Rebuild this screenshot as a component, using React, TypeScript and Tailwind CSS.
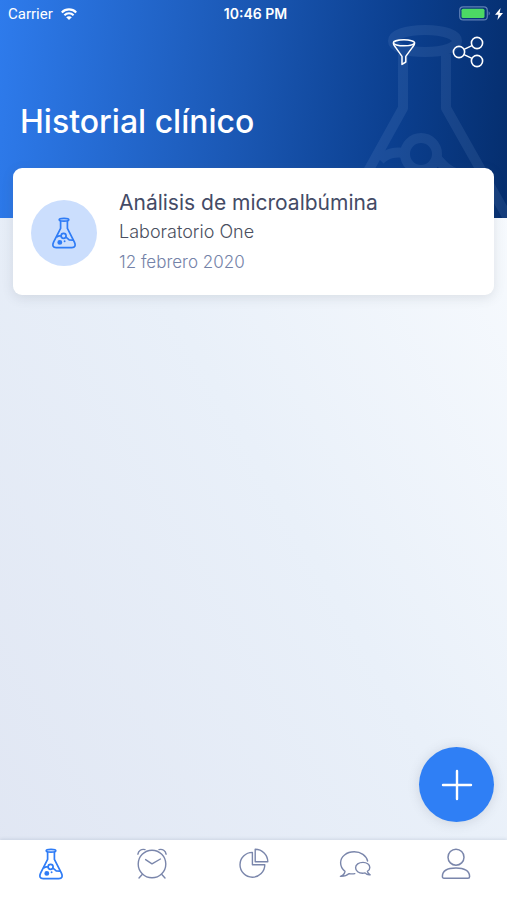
import type { ReactNode } from "react";

type IconProps = { className?: string };

type HistoryEntry = {
  title: string;
  place: string;
  date: string;
};

const entries: HistoryEntry[] = [
  {
    title: "Análisis de microalbúmina",
    place: "Laboratorio One",
    date: "12 febrero 2020",
  },
];

function Flask({ className }: IconProps) {
  return (
    <svg className={className} viewBox="0 0 24 32" fill="none" stroke="currentColor" strokeWidth="1.7" strokeLinecap="round" strokeLinejoin="round">
      <ellipse cx="12" cy="2.8" rx="4.8" ry="1.4" />
      <path d="M8.6 4.2V11.4L1.7 24.8C0 28.4 1 30.6 4.2 30.6H19.8C23 30.6 24 28.4 22.3 24.8L15.4 11.4V4.2" />
      <path d="M5 19.8C6.4 18.6 7.8 18.6 9.2 19M14 20.2L17.2 22.8L21 23.2" />
      <circle cx="11.6" cy="18.8" r="2.5" />
      <circle cx="7.8" cy="25.4" r="1.6" fill="currentColor" />
      <path d="M12.6 24.2V24.3" strokeWidth="1.9" />
    </svg>
  );
}

function Clock({ className }: IconProps) {
  return (
    <svg className={className} viewBox="0 0 30 32" fill="none" stroke="currentColor" strokeWidth="1.4" strokeLinecap="round" strokeLinejoin="round">
      <circle cx="15" cy="16" r="13.8" />
      <path d="M8.6 11.6L15 15.8L23.4 11" />
      <path d="M0.9 6.2C1.4 2.6 4.4 0.8 8 1.6M29.1 6.2C28.6 2.6 25.6 0.8 22 1.6" />
      <path d="M5.2 26.6L2 30M24.8 26.6L28 30" />
    </svg>
  );
}

function Pie({ className }: IconProps) {
  return (
    <svg className={className} viewBox="0 0 30 30" fill="none" stroke="currentColor" strokeWidth="1.4" strokeLinejoin="round">
      <path d="M13.4 4.4A12.4 12.4 0 1 0 25.8 16.8H13.4Z" />
      <path d="M16.2 1.2A12.6 12.6 0 0 1 28.8 13.8H16.2Z" />
    </svg>
  );
}

function Chat({ className }: IconProps) {
  return (
    <svg className={className} viewBox="0 0 32 28" fill="none" stroke="currentColor" strokeWidth="1.4" strokeLinecap="round" strokeLinejoin="round">
      <path d="M28.6 11C27.4 5.4 21.8 1.8 15.2 1.8C7.6 1.8 1.6 6.6 1.6 12.8C1.6 16.4 3.4 19.4 6 21.4C5.6 23.6 3.8 25.6 1.4 26.4C5.2 26.6 8.2 25.4 10.2 23.6C12 24 14 24 15.8 23.6" />
      <path d="M28.4 21.4C30 20.4 30.8 19 30.8 17.4C30.8 14.4 27.6 12.4 24 12.4C19.8 12.4 16.6 14.6 16.6 17.8C16.6 21 19.8 23.2 23.6 23.2C24.4 23.2 25.2 23.1 26 22.9C27.2 24.2 29 25.2 31.2 24.8C29.6 24 28.6 22.8 28.4 21.4Z" />
    </svg>
  );
}

function Person({ className }: IconProps) {
  return (
    <svg className={className} viewBox="0 0 30 32" fill="none" stroke="currentColor" strokeWidth="1.5" strokeLinejoin="round">
      <circle cx="15" cy="9.2" r="8" />
      <path d="M1.4 28.4C1.4 23 6.6 20 15 20C23.4 20 28.6 23 28.6 28.4C28.6 29.6 28 30.2 27 30.2H3C2 30.2 1.4 29.6 1.4 28.4Z" />
    </svg>
  );
}

function Funnel() {
  return (
    <svg className="h-7 w-6" viewBox="0 0 24 28" fill="none" stroke="currentColor" strokeWidth="1.5" strokeLinejoin="round">
      <ellipse cx="12" cy="4.8" rx="10.6" ry="3" />
      <path d="M1.4 5.2C1.4 7 2.6 8 3.6 9.4L10 18.4V26.4L13.8 24V18.4L20.4 9.4C21.4 8 22.6 7 22.6 5.2" />
    </svg>
  );
}

function Share() {
  return (
    <svg className="h-8 w-8" viewBox="0 0 32 32" fill="none" stroke="currentColor" strokeWidth="1.6">
      <circle cx="7" cy="16" r="5.6" />
      <circle cx="25" cy="7" r="5.6" />
      <circle cx="25" cy="25" r="5.6" />
      <path d="M12 13.4L20 9.6M12 18.6L20 22.4" />
    </svg>
  );
}

function StatusBar() {
  return (
    <div className="grid h-7 grid-cols-3 items-center pr-1 pl-2 font-['Roboto',sans-serif] text-[15px]">
      <div className="flex items-center gap-2">
        <span>Carrier</span>
        <svg className="h-3 w-4" viewBox="0 0 16 12" fill="none" stroke="currentColor" strokeWidth="2.1">
          <path d="M0.8 4.4C4.8 0.4 11.2 0.4 15.2 4.4M3.4 7.2C6 4.6 10 4.6 12.6 7.2" />
          <path d="M8 12L5.2 9.2C6.8 7.8 9.2 7.8 10.8 9.2Z" fill="currentColor" stroke="none" />
        </svg>
      </div>
      <span className="text-center font-['Inter',sans-serif] text-sm font-semibold">10:46 PM</span>
      <div className="flex items-center justify-end gap-1">
        <svg className="h-4 w-8" viewBox="0 0 32 16" fill="none">
          <rect x="0.7" y="0.9" width="27.6" height="13" rx="3.5" stroke="#5f7fb5" strokeWidth="1.2" />
          <rect x="2.5" y="2.7" width="23" height="9.4" rx="1.6" fill="#4cd964" />
          <path d="M29.6 5.3C31.2 6.1 31.2 8.7 29.6 9.5Z" fill="#5f7fb5" />
        </svg>
        <svg className="h-3 w-2" viewBox="0 0 8 12" fill="currentColor">
          <path d="M5.6 0L0 6.8H3.4L2.4 12L8 5H4.6Z" />
        </svg>
      </div>
    </div>
  );
}

// Oversized flask that fades into the right side of the header
function HeaderFlask() {
  return (
    <svg className="absolute right-0 bottom-0 h-[194px] w-[150px] text-[#a5c4ee] opacity-10" viewBox="357 24 150 194" fill="none" stroke="currentColor" strokeWidth="10" strokeLinejoin="round">
      <path d="M403 54V108L342 218M446 54V108L508 218" />
      <path d="M425 30C405 30 393 35 393 41S405 52 425 52S457 47 457 41S445 30 425 30Z" />
      <path d="M380 160C388 152 396 152 406 153M435 156C442 164 446 170 458 174" />
      <circle cx="421" cy="154" r="16" />
    </svg>
  );
}

function EntryCard({ entry }: { entry: HistoryEntry }) {
  return (
    <article className="flex items-center gap-[22px] rounded-[9px] bg-white px-[18px] pt-[21px] pb-[18px] shadow-[0_3px_12px_rgba(80,85,100,0.14)]">
      <div className="flex size-[66px] shrink-0 items-center justify-center rounded-full bg-[#cbdefd] text-[#2f7cf6]">
        <Flask className="h-8 w-6" />
      </div>
      <div className="font-light">
        <h2 className="text-[21px] leading-7 font-normal text-[#444b66]">{entry.title}</h2>
        <p className="text-lg leading-[30px] text-[#4b5060]">{entry.place}</p>
        <p className="text-[17px] leading-[30px] text-[#7482a8]">{entry.date}</p>
      </div>
    </article>
  );
}

function Tab({ label, active, children }: { label: string; active?: boolean; children: ReactNode }) {
  return (
    <a
      href="#"
      aria-label={label}
      className={active ? "flex flex-1 justify-center text-[#2f7cf6]" : "flex flex-1 justify-center text-[#7a86ab]"}
    >
      {children}
    </a>
  );
}

export default function App() {
  return (
    <div className="flex min-h-screen flex-col bg-linear-[60deg,#e0e6f3,#e9f0f9_50%,#fbfdff] font-['Inter','Open_Sans',sans-serif]">
      <header className="relative overflow-hidden bg-linear-[95deg,#2e7bec,#1a57b3_48%,#0b3f8f_77%,#052e6e] pb-[74px] text-white">
        <HeaderFlask />
        <div className="relative">
          <StatusBar />
          <div className="flex h-12 items-center justify-end gap-9 pr-[23px]">
            <button type="button" aria-label="Filtrar">
              <Funnel />
            </button>
            <button type="button" aria-label="Compartir">
              <Share />
            </button>
          </div>
          <h1 className="px-5 pt-6 text-[32px] leading-[44px] font-medium">Historial clínico</h1>
        </div>
      </header>

      <main className="relative -mt-[50px] flex-1 px-[13px]">
        {entries.map((entry) => (
          <EntryCard key={entry.title} entry={entry} />
        ))}
      </main>

      <div className="flex justify-end px-[13px] pb-[18px]">
        <button
          type="button"
          aria-label="Añadir"
          className="flex size-[75px] items-center justify-center rounded-full bg-[#2f7ff5] text-white shadow-[0_1px_12px_rgba(80,85,100,0.18)]"
        >
          <svg className="size-8" viewBox="0 0 32 32" stroke="currentColor" strokeWidth="2.4" strokeLinecap="round">
            <path d="M16 2V30M2 16H30" />
          </svg>
        </button>
      </div>

      <nav className="flex h-[60px] bg-white pt-2 shadow-[0_-1px_3px_rgba(70,85,120,0.15)]">
        <Tab label="Historial" active>
          <Flask className="h-8 w-6" />
        </Tab>
        <Tab label="Recordatorios">
          <Clock className="h-8 w-[30px]" />
        </Tab>
        <Tab label="Estadísticas">
          <Pie className="size-[30px]" />
        </Tab>
        <Tab label="Mensajes">
          <Chat className="mt-0.5 h-7 w-8" />
        </Tab>
        <Tab label="Perfil">
          <Person className="h-8 w-[30px]" />
        </Tab>
      </nav>
    </div>
  );
}
